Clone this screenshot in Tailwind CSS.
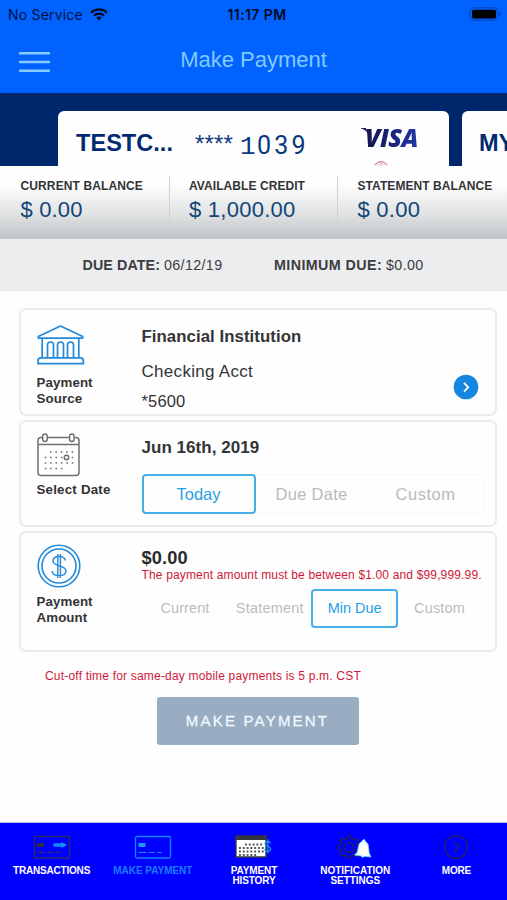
<!DOCTYPE html>
<html lang="en">
<head>
<meta charset="utf-8">
<meta name="viewport" content="width=device-width, initial-scale=1">
<title>Make Payment</title>
<script src="https://cdn.jsdelivr.net/npm/@tailwindcss/browser@4"></script>
</head>
<body class="bg-[#fefefe]">
<div class="w-[507px] h-[900px] overflow-hidden flex flex-col bg-[#fefefe] font-['Liberation_Sans',Arial,sans-serif] text-[#333436] whitespace-nowrap">

  <!-- Status bar and title -->
  <header class="h-[93px] shrink-0 bg-[#0062ff]">
    <div class="h-7 grid grid-cols-3 items-center pl-2 pr-[5px] text-[14px] text-[#001340] font-['Inter',sans-serif]">
      <div class="flex items-center gap-[7px]">
        <span class="tracking-[0.2px]">No Service</span>
        <svg width="18" height="13" viewBox="0 0 18 13" fill="none" stroke="#000a20" stroke-width="2.3"><path d="M1 4.700a11.300 11.300 0 0 1 16 0M4 7.800a7 7 0 0 1 10 0"/><path d="M9 12.400 6.300 9.800a3.900 3.900 0 0 1 5.400 0z" fill="#000a20" stroke="none"/></svg>
      </div>
      <div class="text-center font-semibold text-[#000a25] tracking-[0.400px] pl-1">11:17 PM</div>
      <svg class="justify-self-end -mt-px" width="33" height="14" viewBox="0 0 33 14"><rect x=".8" y=".8" width="28" height="12.400" rx="3.500" fill="none" stroke="#0044b0"/><rect x="3" y="2.800" width="24" height="8.600" rx="1.600" fill="#000"/><path d="M30.300 4.800v4.400q1.700-.6 1.700-2.200t-1.700-2.200" fill="#0044b0"/></svg>
    </div>
    <div class="h-[65px] grid grid-cols-[180px_1fr_180px] items-center">
      <svg class="ml-[19px] mt-[3px]" width="31" height="24" viewBox="0 0 31 24" stroke="#86ccff" stroke-width="2.600"><path d="M0 3.200h31M0 12h31M0 20.800h31"/></svg>
      <h1 class="text-[22px] leading-6 text-[#82caff] text-center mb-[2px]">Make Payment</h1>
    </div>
  </header>

  <!-- Account cards -->
  <section class="h-[73px] shrink-0 bg-[#00266b] flex gap-[13px] pt-[18px] pl-[58px] overflow-hidden">
    <div class="w-[391px] shrink-0 bg-[#fefefe] rounded-t-[6px] flex text-[#002a73] h-[55px]">
      <div class="w-[119px] pl-[18px] pt-5 text-[23.500px] leading-6 font-bold tracking-[0.050px]">TESTC...</div>
      <div class="w-[46px] pl-[18px] pt-[21px] text-[24px] leading-6 tracking-[0.200px] text-[#0c3a80]">****</div>
      <div class="w-[138px] pl-[17px] pt-[23px] text-[26px] leading-6 tracking-[1.300px] text-[#06387e] font-['Liberation_Mono',monospace]">1<span class="font-['Roboto',sans-serif] font-normal text-[25px] tracking-[3.300px]">039</span></div>
      <div class="w-[58px] pt-[14px] flex flex-col">
        <div class="flex">
          <svg class="shrink-0 mt-[3px] -mr-[3px]" width="7" height="6" viewBox="0 0 7 6"><path d="M0 0h5l2 6Q5 2 0 .6z" fill="#16195f"/></svg>
          <div class="text-[25px] leading-6 italic font-extrabold tracking-[-0.500px] pr-1 text-transparent bg-clip-text bg-linear-to-r from-[#15124f] to-[#2138b0] font-['Open_Sans',sans-serif]">VISA</div>
        </div>
        <svg class="mt-[11px] ml-[10px]" width="20" height="8" viewBox="0 0 20 8" fill="none"><path d="M1.500 7Q10-2.600 18.500 7" stroke="#d0868f" stroke-width="1.500"/><path d="M5 7q5-4 10 0M10 3v5" stroke="#dca9ad" stroke-width=".9"/></svg>
      </div>
    </div>
    <div class="w-[391px] shrink-0 bg-[#fefefe] rounded-t-[6px] text-[#002a73] pl-[17px] pt-5 text-[23.500px] leading-6 font-bold">MY</div>
  </section>

  <!-- Balances -->
  <section class="h-[73px] shrink-0 bg-linear-to-b from-[#fefefe] from-25% via-[#e1e3e4] via-65% to-[#bfc3c5] grid grid-cols-[168.500px_168.500px_1fr]">
    <div class="pl-[20.500px] pt-[13px]"><div class="text-[12px] leading-[14px] font-bold tracking-[0.120px]">CURRENT BALANCE</div><div class="text-[22px] leading-6 mt-[5px] tracking-[0.150px] text-[#114577]">$ 0.00</div></div>
    <div class="relative pl-[20.500px] pt-[13px]"><i class="absolute left-0 top-[10px] h-[52px] w-px bg-[#cfd1d2]"></i><div class="text-[12px] leading-[14px] font-bold tracking-[0.070px]">AVAILABLE CREDIT</div><div class="text-[22px] leading-6 mt-[5px] tracking-[0.250px] text-[#114577]">$ 1,000.00</div></div>
    <div class="relative pl-[20.500px] pt-[13px]"><i class="absolute left-0 top-[10px] h-[52px] w-px bg-[#cfd1d2]"></i><div class="text-[12px] leading-[14px] font-bold tracking-[0.070px]">STATEMENT BALANCE</div><div class="text-[22px] leading-6 mt-[5px] tracking-[0.250px] text-[#114577]">$ 0.00</div></div>
  </section>
  <section class="h-[52px] shrink-0 bg-[#ecedef] flex items-center pt-px pl-[82.500px] text-[14.300px] text-[#3c3d40]">
    <div class="w-[191.500px]"><b class="tracking-[0.080px]">DUE DATE:</b> <span class="tracking-[0.350px]">06/12/19</span></div>
    <div><b class="tracking-[0.400px]">MINIMUM DUE:</b> <span class="tracking-[0.350px]">$0.00</span></div>
  </section>

  <!-- Payment form -->
  <main class="flex flex-col gap-[4px] pt-[17px] pl-[19px] shrink-0">
    <section class="w-[478px] h-[108px] border-2 border-[#ebebeb] rounded-[7px] flex">
      <div class="w-[120.500px] pl-[15.500px] pt-[15px]">
        <svg width="48" height="41" viewBox="0 0 48 41" fill="none" stroke="#2389da" stroke-width="1.700" stroke-linejoin="round"><path d="M1.300 11.500 23.500 1l22.200 10.500v1.600H1.300zM5.200 13.100v19.500M41.800 13.100v19.500M1 38.700V36q0-3.200 3.200-3.200h39q3.200 0 3.200 3.200v2.700zM10.500 32.500V20q0-3 3-3t3 3v12.500M20.500 32.500V20q0-3 3-3t3 3v12.500M30.500 32.500V20q0-3 3-3t3 3v12.500"/></svg>
        <div class="mt-[9px] text-[13.300px] leading-[16px] font-bold tracking-[0.100px]">Payment<br>Source</div>
      </div>
      <div class="w-[311.500px] pt-[17px]">
        <div class="text-[16.800px] leading-5 font-bold tracking-[0.060px]">Financial Institution</div>
        <div class="text-[17px] leading-[30px] mt-[10px] tracking-[0.300px]">Checking Acct</div>
        <div class="text-[16.500px] leading-[30px] -mt-[1px] tracking-[0.150px]">*5600</div>
      </div>
      <svg class="mt-[64px]" width="26" height="26" viewBox="0 0 26 26" fill="none"><circle cx="13" cy="13" r="12.300" fill="#1487e0"/><path d="m11 8.800 4.200 4.400-4.200 4.400" stroke="#fff" stroke-width="1.800"/></svg>
    </section>

    <section class="w-[478px] h-[107px] border-2 border-[#ebebeb] rounded-[7px] flex">
      <div class="w-[120.500px] pl-[15.500px] pt-[11px]">
        <svg width="44" height="44" viewBox="0 0 44 44" fill="none" stroke="#707070" stroke-width="1.500"><path d="M5.500 4.500H4Q1 4.500 1 7.500v32Q1 42.500 4 42.500h35q3 0 3-3v-32q0-3-3-3h-1.300M10.500 4.500h22M1 11.500h41"/><rect x="5.700" y="1" width="4.500" height="7.500" rx="2.200"/><rect x="32.600" y="1" width="4.500" height="7.500" rx="2.200"/><path d="M13 19h24M7.700 24.500h28.500M7.700 30h29M7.700 35.500h18" stroke-width="1.600" stroke-dasharray="1.600 3.800"/><circle cx="29.500" cy="24.500" r="2.200" fill="#fff"/></svg>
        <div class="mt-[5px] text-[13.300px] leading-4 font-bold tracking-[0.220px]">Select Date</div>
      </div>
      <div class="w-[342px] pt-[16px]">
        <div class="text-[17px] leading-5 font-bold tracking-[0.040px]">Jun 16th, 2019</div>
        <div class="mt-[16px] h-[39px] grid grid-cols-[112px_1fr_1fr] border border-[#f8f8f8] rounded-[4px] text-[16.500px] text-[#b9babd] text-center leading-[38px]">
          <div class="-m-px border-2 leading-[36px] border-[#48aee8] rounded-[4px] text-[#279fe3]">Today</div><div class="tracking-[0.300px]">Due Date</div><div class="tracking-[0.500px]">Custom</div>
        </div>
      </div>
    </section>

    <section class="w-[478px] h-[121px] border-2 border-[#ebebeb] rounded-[7px] flex">
      <div class="w-[120.500px] pl-[15.500px] pt-[11px]">
        <svg width="44" height="44" viewBox="0 0 44 44" fill="none" stroke="#2389da" stroke-width="1.600"><circle cx="22" cy="22" r="20.800"/><circle cx="22" cy="22" r="17"/><path d="M28.500 16.500q-1-4-6.500-4-6 0-6 4.600c0 6 13 3.500 13 9.800 0 3-2.500 4.700-7 4.700q-6.500 0-7-4.500M20.800 10v24M23.400 10v24" stroke-width="1.400"/></svg>
        <div class="mt-[6px] text-[13.300px] leading-4 font-bold tracking-[0.100px]">Payment<br>Amount</div>
      </div>
      <div class="w-[341.500px] pt-[15px]">
        <div class="text-[18.200px] leading-5 font-bold tracking-[0.150px] text-[#2a2b2d]">$0.00</div>
        <div class="text-[12px] leading-[14px] tracking-[0.155px] text-[#cf1839]">The payment amount must be between $1.00 and $99,999.99.</div>
        <div class="mt-[7px] h-[38px] grid grid-cols-4 border border-[#f9f9f9] rounded-[4px] text-[14.500px] text-[#bbbcbf] text-center leading-[37px]">
          <div class="tracking-[0.100px]">Current</div><div class="tracking-[0.200px]">Statement</div><div class="-m-px border-2 border-[#48aee8] rounded-[4px] text-[#279fe3] leading-[35px]">Min Due</div><div class="tracking-[0.200px]">Custom</div>
        </div>
      </div>
    </section>
  </main>

  <div class="mt-[16px] ml-[45px] text-[12px] leading-4 text-[#cf1839] tracking-[0.195px]">Cut-off time for same-day mobile payments is 5 p.m. CST</div>
  <button class="mt-[13px] ml-[157px] w-[202px] h-[48px] shrink-0 rounded-[3px] bg-[#98adc2] text-[#f2f8ff] text-[15px] tracking-[2.200px] pr-[1px] [-webkit-text-stroke:0.3px_#f2f8ff]">MAKE PAYMENT</button>

  <!-- Tab bar -->
  <nav class="mt-auto h-[78px] shrink-0 bg-[#0000fe] border-t border-[#b8b8ed] grid grid-cols-5 pt-3 pl-px text-center font-bold text-white text-[10px] leading-[10px] tracking-[-0.200px]">
    <div class="flex flex-col items-center gap-[7px]">
      <svg width="38" height="24" viewBox="0 0 38 24" fill="none"><rect x="1.500" y="1.500" width="35" height="21.500" rx="1" stroke="#2a2a68" stroke-width="1.500"/><path d="M4 8h7v4H4z" fill="#2e2e42"/><path d="M20.500 8.300h8V7l5.500 3-5.500 3v-1.300h-8z" fill="#1690f4"/><path d="M4 17.500h8m2 0h6m2 0h5" stroke="#2a2a70" stroke-width="1.400"/></svg>
      <span>TRANSACTIONS</span>
    </div>
    <div class="flex flex-col items-center gap-[7px] text-[#187eff]">
      <svg width="38" height="24" viewBox="0 0 38 24" fill="none" stroke="#1683ff"><rect x="1.500" y="1.500" width="35" height="21.500" rx="1.500" stroke-width="1.300"/><path d="M4.500 8h7v4h-7z" fill="#1b97f2" stroke="none"/><path d="M4.500 17.500h8m2 0h6m2.500 0h5" stroke-width="1.200"/></svg>
      <span class="tracking-[-0.020px]">MAKE PAYMENT</span>
    </div>
    <div class="flex flex-col items-center gap-[7px]">
      <svg width="37" height="24" viewBox="0 0 37 24"><path d="M1 1h30v21H1z" fill="#fff" stroke="#35353d" stroke-width="1.300"/><path d="M.5 1h31v4H.5z" fill="#35353d"/><path d="M10 9.500h19M4 13h25M4 16.500h25M4 20h19" stroke="#55555c" stroke-width="1.900" stroke-dasharray="1.900 1.900"/><path d="M35.500 8.500q-.6-2-2.800-2-2.500 0-2.500 2.500c0 3 5.500 1.800 5.500 4.800q0 2.500-2.800 2.500-2.700 0-3-2.300M32.900 4.500v14" fill="none" stroke="#168eea" stroke-width="1.300"/></svg>
      <span class="tracking-[-0.100px]">PAYMENT<br>HISTORY</span>
    </div>
    <div class="flex flex-col items-center gap-[7px]">
      <svg width="36" height="24" viewBox="0 0 36 24" fill="none"><path d="m10.500 1 3 .1.700 3 2.300.9 2.600-1.500 2 2-1.500 2.600.8 2.200 2.900.7v3l-2.900.7-.9 2.200 1.600 2.600-2.100 2-2.500-1.500-2.300.9-.7 2.800h-3l-.7-2.800-2.300-.9L5 21.500l-2.100-2 1.600-2.600-.9-2.200-2.900-.7v-3l2.900-.7.900-2.200L3 5.500l2-2L7.600 5l2.200-.9z" stroke="#202062" stroke-width="1.500"/><circle cx="12" cy="12.500" r="5" stroke="#202062" stroke-width="1.500"/><path d="M17.500 20q3.500-2 3.700-7.500.3-5 4-6.300.2-1.700 1.800-1.600 1.400.2 1.300 2 3.700 1.600 3.400 7-.1 5 2.300 8.400l-6.800-.6q-1.200 2.300-3.200-.4z" fill="#fff" stroke="#54d1ff" stroke-width=".8"/></svg>
      <span class="tracking-[-0.050px]">NOTIFICATION<br>SETTINGS</span>
    </div>
    <div class="flex flex-col items-center gap-[7px]">
      <svg width="26" height="24" viewBox="0 0 26 24" fill="none" stroke="#20206a" stroke-width="1.500"><circle cx="13" cy="12" r="11.200"/><path d="m11 6.500 5 5.500-5 5.500"/></svg>
      <span>MORE</span>
    </div>
  </nav>
</div>
</body>
</html>
